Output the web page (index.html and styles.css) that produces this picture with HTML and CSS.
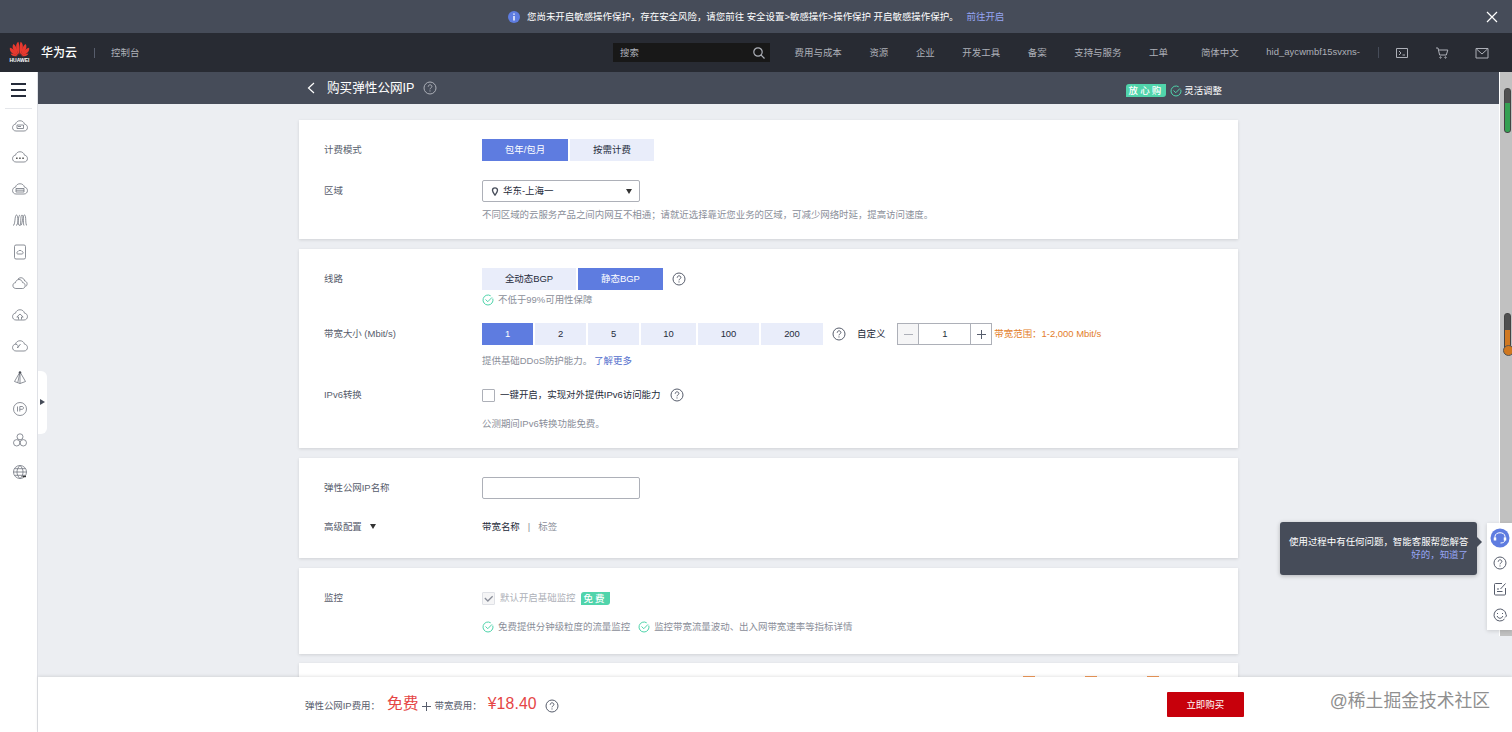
FILE: index.html
```html
<!DOCTYPE html>
<html lang="zh-CN">
<head>
    <meta charset="UTF-8">
    <meta name="viewport" content="width=device-width, initial-scale=1.0">
    <title>购买弹性公网IP</title>
    <link rel="stylesheet" href="styles.css">
</head>
<body>
    <svg class="symbols">
        <symbol id="help" viewBox="0 0 14 14">
            <circle cx="7" cy="7" r="6"/>
            <path d="M5.2 5.7C5.2 3.2 8.9 3.3 8.9 5.5C8.9 6.8 7 6.9 7 8.3M7 9.4V10.5"/>
        </symbol>
        <symbol id="check" viewBox="0 0 12 12">
            <path d="M10.8 4.6A5 5 0 1 1 8.7 1.8M3.5 5.5L5.8 7.7L10 3.4"/>
        </symbol>
        <symbol id="cloud" viewBox="0 0 16 14">
            <path d="M4 12C-0.5 12 -0.5 5.500 3.500 5.200C4.500 0.600 11.500 0.600 12.500 5.200C16.500 5.500 16.500 12 12 12Z"/>
        </symbol>
    </svg>

    <div class="notice">
        <svg class="info" viewBox="0 0 12 12"><circle cx="6" cy="6" r="6"/><path d="M6 2.4V3.8M6 4.9V9.4"/></svg>
        <span class="notice-text">您尚未开启敏感操作保护，存在安全风险，请您前往 安全设置&gt;敏感操作&gt;操作保护 开启敏感操作保护。</span>
        <a class="notice-link">前往开启</a>
        <svg class="close" viewBox="0 0 12 12"><path d="M1 1L11 11M11 1L1 11"/></svg>
    </div>

    <div class="topbar">
        <div class="logo">
            <svg viewBox="0 0 22 16">
                <g fill="#e8392f">
                    <path d="M10.6 14C7 9 6.300 3 9.700 0.500C11 3 11.100 9 10.600 14Z"/>
                    <path d="M11.400 14C15 9 15.700 3 12.300 0.500C11 3 10.900 9 11.400 14Z"/>
                    <path d="M9.700 14.200C4.500 10.500 2.500 6 4.600 2.700C7.500 4.500 9 9 9.700 14.200Z"/>
                    <path d="M12.300 14.200C17.500 10.500 19.500 6 17.400 2.700C14.500 4.500 13 9 12.300 14.200Z"/>
                    <path d="M9.200 14.700C4 14 0.200 11 0.900 6.800C4.500 7.500 7.500 11 9.200 14.700Z"/>
                    <path d="M12.800 14.700C18 14 21.800 11 21.100 6.800C17.500 7.500 14.500 11 12.800 14.700Z"/>
                    <path d="M8.800 15.300C5.500 16.200 2.700 15.500 1.600 12.800C4.500 12.800 7 14 8.800 15.300Z"/>
                    <path d="M13.200 15.300C16.500 16.200 19.300 15.500 20.400 12.800C17.500 12.800 15 14 13.200 15.300Z"/>
                </g>
            </svg>
            <span>HUAWEI</span>
        </div>
        <div class="brand">华为云</div>
        <div class="line"></div>
        <div class="console">控制台</div>
        <div class="nav">
            <div class="search">
                <span>搜索</span>
                <svg viewBox="0 0 12 12"><circle cx="5" cy="5" r="4.200"/><path d="M8 8L11.500 11.500"/></svg>
            </div>
            <div class="nav-item">费用与成本</div>
            <div class="nav-item">资源</div>
            <div class="nav-item">企业</div>
            <div class="nav-item">开发工具</div>
            <div class="nav-item">备案</div>
            <div class="nav-item">支持与服务</div>
            <div class="nav-item">工单</div>
            <div class="nav-item lang">简体中文</div>
            <div class="nav-item user">hid_aycwmbf15svxns-</div>
            <div class="nav-icons">
                <svg viewBox="0 0 14 12"><path d="M1.500 1.500H12.500V10.500H1.500ZM4 4L6 6L4 8M7.500 8H10"/></svg>
                <svg viewBox="0 0 14 12"><path d="M1 1H3L4.600 8H11.300L12.800 3H3.500"/><circle cx="5.500" cy="10.500" r=".7"/><circle cx="10.500" cy="10.500" r=".7"/></svg>
                <svg viewBox="0 0 14 12"><path d="M1 1.500H13V11H1ZM1.500 2L7 7L12.500 2"/></svg>
            </div>
        </div>
    </div>

    <div class="main">
        <div class="sidebar">
            <div class="menu"><i></i><i></i><i></i></div>
            <div class="side-list">
                <svg viewBox="0 0 16 14"><use href="#cloud"/><path d="M5 6H11.500V9.500H5ZM6 7.500H9"/></svg>
                <svg viewBox="0 0 16 14"><use href="#cloud"/><path class="dark" d="M4.200 8.200H5.500M7.300 8.200H8.600M10.400 8.200H11.700"/></svg>
                <svg viewBox="0 0 16 14"><use href="#cloud"/><path d="M4 6.500H12V10H4ZM4 8.200H12"/></svg>
                <svg viewBox="0 0 16 14"><path d="M1 12.500C3.500 12.500 2.500 2 4.500 2S5.500 12.500 7.500 12.500S8 2 10 2S11 12.500 12 12.500M4 12.500C6.500 12.500 6 2 8 2M8.500 12.500C10.500 12.500 10.500 2 12.500 2S13 12.500 15 12.500"/></svg>
                <svg viewBox="0 0 16 14"><rect x="2.500" y="0" width="11" height="14" rx="1.500"/><path d="M6 9C4 9 5 6.500 6 6.500C6.500 5 9.500 5 10 6.500C12 7 11 9 10 9Z"/></svg>
                <svg viewBox="0 0 16 14"><path d="M3.800 12.500C0 12.500 0 6.800 3.400 6.800C4.300 2.300 9.700 2.500 10.500 6.600C14 6.800 14 12.500 10.500 12.500ZM6 3C8.500 0.500 12.200 2 12.700 5C15.500 5.500 15.800 8.800 13.800 10.500"/></svg>
                <svg viewBox="0 0 16 14"><use href="#cloud"/><path d="M6.500 11.500V9H4.800L8 6L11.200 9H9.500V11.500"/></svg>
                <svg viewBox="0 0 16 14"><use href="#cloud"/><path d="M3.500 5.200C6 5.200 6.500 7 5.500 9M5.500 9L8.500 5"/></svg>
                <svg viewBox="0 0 16 14"><path d="M8 1L2.500 10.500L8 12.500L13.500 10.500ZM8 1V12.500M8 1L5.800 11.500"/><circle class="dot" cx="8" cy="1.500" r="1"/></svg>
                <svg viewBox="0 0 16 14"><circle cx="8" cy="7" r="6.500"/><path d="M5.500 4.500V9.500M7.800 9.500V4.500H10C12 4.500 12 7.300 10 7.300H7.800"/></svg>
                <svg viewBox="0 0 16 14"><circle cx="8" cy="3.800" r="3"/><circle cx="4.700" cy="9.800" r="3.200"/><circle cx="11.300" cy="9.800" r="3.200"/></svg>
                <svg viewBox="0 0 16 14"><circle cx="8" cy="7" r="6.500"/><path d="M1.500 7H14.500M2.500 3.700H13.500M2.500 10.300H13.500M8 0.500C4 4 4 10 8 13.500M8 0.500C12 4 12 10 8 13.500"/><path class="dark" d="M10.500 11.500H14"/></svg>
            </div>
        </div>

        <div class="right">
            <div class="view">
                <div class="page">
                    <div class="page-head">
                        <div class="wrap">
                            <svg class="back" viewBox="0 0 8 12"><path d="M7 1L1.500 6L7 11"/></svg>
                            <h1>购买弹性公网IP</h1>
                            <svg class="help"><use href="#help"/></svg>
                            <div class="promise">
                                <span class="tag">放心购</span>
                                <svg class="check"><use href="#check"/></svg>
                                <span>灵活调整</span>
                            </div>
                        </div>
                    </div>

                    <div class="cards">
                        <div class="card card-region">
                            <div class="row">
                                <div class="label">计费模式</div>
                                <div class="btn active w86">包年/包月</div>
                                <div class="btn w84">按需计费</div>
                            </div>
                            <div class="row row-region">
                                <div class="label">区域</div>
                                <div class="select">
                                    <svg viewBox="0 0 8 10"><path d="M4 9C2.500 7 1.200 5.500 1.200 3.700A2.800 2.800 0 0 1 6.800 3.700C6.800 5.500 5.500 7 4 9Z"/></svg>
                                    <span>华东-上海一</span>
                                    <i class="arrow"></i>
                                </div>
                            </div>
                            <div class="hint hint-region">不同区域的云服务产品之间内网互不相通；请就近选择靠近您业务的区域，可减少网络时延，提高访问速度。</div>
                        </div>

                        <div class="card card-line">
                            <div class="row">
                                <div class="label">线路</div>
                                <div class="btn w94">全动态BGP</div>
                                <div class="btn active w85">静态BGP</div>
                                <svg class="help"><use href="#help"/></svg>
                            </div>
                            <div class="hint hint-line">
                                <svg class="check"><use href="#check"/></svg>
                                <span>不低于99%可用性保障</span>
                            </div>
                            <div class="row row-band">
                                <div class="label">带宽大小 (Mbit/s)</div>
                                <div class="btn active w51">1</div>
                                <div class="btn w51">2</div>
                                <div class="btn w51">5</div>
                                <div class="btn w55">10</div>
                                <div class="btn w61">100</div>
                                <div class="btn w62">200</div>
                                <svg class="help help-band"><use href="#help"/></svg>
                                <span class="custom">自定义</span>
                                <div class="stepper">
                                    <span class="minus"></span>
                                    <span class="num">1</span>
                                    <span class="plus"></span>
                                </div>
                                <span class="range">带宽范围：1-2,000 Mbit/s</span>
                            </div>
                            <div class="hint hint-ddos">提供基础DDoS防护能力。<a>了解更多</a></div>
                            <div class="row row-ipv6">
                                <div class="label">IPv6转换</div>
                                <span class="checkbox"></span>
                                <span>一键开启，实现对外提供IPv6访问能力</span>
                                <svg class="help help-ipv6"><use href="#help"/></svg>
                            </div>
                            <div class="hint hint-free">公测期间IPv6转换功能免费。</div>
                        </div>

                        <div class="card card-name">
                            <div class="row">
                                <div class="label">弹性公网IP名称</div>
                                <input class="input" type="text">
                            </div>
                            <div class="row row-adv">
                                <div class="label">高级配置<i class="arrow"></i></div>
                                <span class="strong">带宽名称</span>
                                <span class="split">|</span>
                                <span class="gray">标签</span>
                            </div>
                        </div>

                        <div class="card card-monitor">
                            <div class="row">
                                <div class="label">监控</div>
                                <span class="checkbox disabled"><svg viewBox="0 0 12 12"><path d="M2 5.500L5.300 8.800L10.500 3.500"/></svg></span>
                                <span class="light">默认开启基础监控</span>
                                <span class="tag tag-free">免费</span>
                            </div>
                            <div class="hint hint-free">
                                <svg class="check"><use href="#check"/></svg>
                                <span>免费提供分钟级粒度的流量监控</span>
                                <svg class="check second"><use href="#check"/></svg>
                                <span>监控带宽流量波动、出入网带宽速率等指标详情</span>
                            </div>
                        </div>

                        <div class="card card-last"><i></i><i></i><i></i></div>
                    </div>
                </div>
                <div class="scroll">
                    <div class="thumb green"></div>
                    <div class="thumb orange"></div>
                </div>
            </div>

            <div class="footer">
                <span>弹性公网IP费用：</span>
                <span class="price">免费</span>
                <span class="add"></span>
                <span>带宽费用：</span>
                <span class="price money">¥18.40</span>
                <svg class="help"><use href="#help"/></svg>
                <div class="buy">立即购买</div>
                <div class="mark">@稀土掘金技术社区</div>
            </div>
        </div>
    </div>

    <div class="fold"><i></i></div>

    <div class="tip">
        <div>使用过程中有任何问题，智能客服帮您解答</div>
        <a>好的，知道了</a>
    </div>
    <div class="tools">
        <svg class="service" viewBox="0 0 20 20"><circle class="bg" cx="10" cy="10" r="9.500"/><path d="M5 10V8.500C5 3.500 15 3.500 15 8.500V12C15 14 13 15 10.500 15"/><path class="ear" d="M5 9.500V12.500M15 9.500V12.500"/></svg>
        <svg class="help"><use href="#help"/></svg>
        <svg viewBox="0 0 14 14"><path d="M9 1.500H2.500Q1.500 1.500 1.500 2.500V12Q1.500 13 2.500 13H11.500Q12.500 13 12.500 12V6M12.500 1.500L7.500 7M4 7H6M4 9.500H9.500"/></svg>
        <svg viewBox="0 0 14 14"><path d="M11.500 11A6 6 0 1 1 13 6.500L13.500 8L12 9.500M4.200 8C5 11 9 11 9.800 8M4.500 5V6M9.500 5V6"/></svg>
    </div>
</body>
</html>
```
FILE: styles.css
```css
* {
    box-sizing: border-box;
}
body {
    margin: 0;
    height: 732px;
    overflow: hidden;
    position: relative;
    display: flex;
    flex-direction: column;
    font-family: "Liberation Sans", "Noto Sans CJK SC", sans-serif;
    font-size: 9.45px;
    line-height: 14px;
    color: #252b3a;
    background-color: #eceef2;
    white-space: nowrap;
}
svg {
    fill: none;
    stroke: currentColor;
    flex-shrink: 0;
}
.symbols {
    position: absolute;
    width: 0;
    height: 0;
}
.help {
    width: 14px;
    height: 14px;
    color: #575d6c;
}
.check {
    width: 12px;
    height: 12px;
    color: #50d4ab;
}
.arrow {
    border: 3.5px solid transparent;
    border-top: 5px solid #333;
    border-bottom: 0;
}
.notice {
    height: 33px;
    display: flex;
    align-items: center;
    padding-left: 508px;
    padding-right: 14px;
    background-color: #464c59;
    color: #fff;
}
.notice .info {
    width: 12px;
    height: 12px;
    margin-right: 7px;
    color: #fff;
    stroke-width: 1.4;
}
.notice .info circle {
    fill: #5e7ce0;
    stroke: none;
}
.notice-link {
    margin-left: 8px;
    color: #96a6f5;
}
.notice .close {
    width: 12px;
    height: 12px;
    margin-left: auto;
    stroke-width: 1.2;
}
.topbar {
    height: 39px;
    display: flex;
    align-items: center;
    padding-left: 8px;
    background-color: #282b33;
    color: #adb0b8;
}
.logo {
    width: 23px;
    display: flex;
    flex-direction: column;
    align-items: center;
}
.logo svg {
    width: 21px;
    height: 16px;
    stroke: none;
}
.logo span {
    font-size: 5px;
    line-height: 7px;
    font-weight: bold;
    color: #fff;
}
.brand {
    margin-left: 10px;
    font-size: 12px;
    font-weight: 500;
    color: #fff;
}
.line {
    width: 1px;
    height: 10px;
    margin: 0 16px 0 17px;
    background-color: #575d6c;
}
.nav {
    width: 899px;
    margin-left: auto;
    display: flex;
    align-items: center;
}
.search {
    width: 157px;
    height: 19px;
    padding: 0 5px 0 7px;
    margin-right: -3px;
    display: flex;
    align-items: center;
    justify-content: space-between;
    background-color: #181818;
}
.search svg {
    width: 12px;
    height: 12px;
    stroke-width: 1.2;
}
.nav-item {
    margin-left: 27.6px;
}
.nav-item.lang {
    margin-left: 33px;
}
.nav-item.user {
    width: 94px;
    margin-top: -2px;
    letter-spacing: .05px;
}
.nav-icons {
    height: 11px;
    display: flex;
    gap: 26px;
    padding-left: 16px;
    margin-left: 18px;
    border-left: 1px solid #464c59;
}
.nav-icons svg {
    width: 14px;
    height: 12px;
}
.main {
    flex: 1;
    display: flex;
}
.sidebar {
    width: 38px;
    background-color: #fff;
    border-right: 1px solid #dfe1e6;
}
.menu {
    height: 37px;
    margin: 0 5px;
    padding: 11px 6px 0;
    border-bottom: 1px solid #e4e6ea;
}
.menu i {
    display: block;
    width: 15px;
    height: 1.5px;
    margin-bottom: 4.5px;
    background-color: #252b3a;
}
.side-list {
    padding: 10px 0 0 12px;
    display: flex;
    flex-direction: column;
    gap: 17.45px;
}
.side-list svg {
    width: 16px;
    height: 14px;
    color: #70757f;
    stroke-width: .8;
    overflow: visible;
}
.side-list .dark {
    stroke: #333;
    stroke-width: 1.4;
}
.side-list .dot {
    fill: #222;
}
.right {
    width: 1474px;
    display: flex;
    flex-direction: column;
}
.view {
    height: 605px;
    display: flex;
    overflow: hidden;
}
.page {
    width: 1461px;
}
.page-head {
    height: 32px;
    background-color: #464c59;
    color: #fff;
}
.page-head .wrap {
    height: 32px;
    padding: 0 277px 0 269px;
    display: flex;
    align-items: center;
}
.back {
    width: 8px;
    height: 12px;
    margin-right: 12px;
    stroke-width: 1.2;
}
h1 {
    margin: 0;
    font-size: 12.6px;
    font-weight: normal;
}
.page-head .help {
    margin-left: 9px;
    color: #adb0b8;
}
.promise {
    display: flex;
    align-items: center;
    margin-left: auto;
    padding-top: 5px;
}
.tag {
    height: 13px;
    padding: 0 3px;
    border-radius: 3px 0;
    background-color: #50d4ab;
    color: #fff;
    line-height: 13px;
    letter-spacing: 2.1px;
    font-weight: 500;
}
.promise .check {
    margin: 0 2px 0 4px;
}
.cards {
    width: 939px;
    margin: 16px 0 0 261px;
}
.card {
    padding: 19px 0 0 25px;
    margin-bottom: 10px;
    background-color: #fff;
    box-shadow: 0 1px 3px rgba(0, 0, 0, .12);
}
.card-region {
    height: 119px;
}
.card-line {
    height: 199px;
}
.card-name {
    height: 100px;
}
.card-monitor {
    height: 86px;
    margin-bottom: 9px;
}
.card-last {
    height: 60px;
    padding: 13px 0 0 724px;
    display: flex;
    gap: 50px;
}
.card-last i {
    width: 12px;
    height: 12px;
    background-color: #ef9a5b;
}
.row {
    height: 22px;
    display: flex;
    align-items: center;
}
.row-region {
    margin-top: 19px;
}
.row-band {
    margin-top: 16px;
}
.row-ipv6 {
    margin-top: 16px;
}
.row-adv {
    margin-top: 17px;
}
.label {
    width: 158px;
    color: #575d6c;
}
.label .arrow {
    display: inline-block;
    margin-left: 8px;
    vertical-align: 1px;
}
.hint {
    height: 14px;
    padding-left: 158px;
    display: flex;
    align-items: center;
    color: #8a8e99;
}
.hint-region {
    margin-top: 6px;
    letter-spacing: -.04px;
}
.hint-line {
    margin-top: 3px;
}
.hint-ddos {
    margin-top: 9px;
}
.hint-free {
    margin-top: 11px;
}
.hint a {
    margin-left: 2px;
    color: #526ecc;
}
.hint .check {
    margin-right: 4px;
}
.hint .second {
    margin-left: 8px;
}
.btn {
    height: 22px;
    margin-right: 2px;
    line-height: 22px;
    text-align: center;
    background-color: #e9edfa;
}
.btn.active {
    background-color: #5e7ce0;
    color: #fff;
}
.w51 {
    width: 51px;
}
.w55 {
    width: 55px;
}
.w61 {
    width: 61px;
}
.w62 {
    width: 62px;
}
.w84 {
    width: 84px;
}
.w85 {
    width: 85px;
}
.w86 {
    width: 86px;
}
.w94 {
    width: 94px;
}
.row .help {
    margin-left: 7px;
}
.select, .input {
    width: 158px;
    height: 22px;
    border: 1px solid #adb0b8;
    border-radius: 2px;
    background-color: #fff;
}
.select {
    padding: 0 7px 0 8px;
    display: flex;
    align-items: center;
}
.select svg {
    width: 8px;
    height: 9px;
    margin-right: 4px;
    stroke-width: 1.5;
    color: #464c59;
}
.select .arrow {
    margin-left: auto;
}
.custom {
    margin: 0 12px 0 11px;
}
.stepper {
    width: 95px;
    height: 22px;
    display: flex;
    border: 1px solid #adb0b8;
}
.stepper .num {
    flex: 1;
    line-height: 20px;
    text-align: center;
    border-left: 1px solid #adb0b8;
    border-right: 1px solid #adb0b8;
}
.minus, .plus {
    width: 20px;
    background: linear-gradient(#575d6c, #575d6c) center / 9px 1px no-repeat;
}
.minus {
    background: linear-gradient(#adb0b8, #adb0b8) center / 9px 1px no-repeat #f5f5f6;
}
.plus, .add {
    background: linear-gradient(#575d6c, #575d6c) center / 9px 1px no-repeat, linear-gradient(#575d6c, #575d6c) center / 1px 9px no-repeat;
}
.range {
    margin: -1px 0 0 2px;
    color: #e37d29;
}
.checkbox {
    width: 13px;
    height: 13px;
    margin-right: 5px;
    border: 1px solid #adb0b8;
    border-radius: 1px;
}
.checkbox.disabled {
    border-color: #dfe1e6;
    background-color: #f5f5f6;
    color: #8a8e99;
}
.checkbox svg {
    display: block;
    width: 11px;
    height: 11px;
    stroke-width: 1.4;
}
.row .help-ipv6 {
    margin-left: 10px;
}
.strong {
    color: #252b3a;
}
.split {
    margin: 0 8px;
    color: #8a8e99;
}
.gray {
    color: #8a8e99;
}
.light {
    color: #adb0b8;
}
.tag-free {
    margin-left: 5px;
}
.scroll {
    width: 13px;
    height: 564px;
    position: relative;
    border-left: 1px solid #fff;
    background-color: #c1c1c1;
}
.thumb {
    position: absolute;
    left: 4px;
    width: 7px;
    border-radius: 3px;
}
.thumb.green {
    top: 16px;
    height: 45px;
    border: 1px solid #444;
    background: linear-gradient(#505050 14px, #35a052 14px);
}
.thumb.orange {
    top: 241px;
    height: 42px;
    border: 1px solid #444;
    background: linear-gradient(#505050 16px, #d07820 16px);
}
.thumb.orange::after {
    content: "";
    position: absolute;
    left: -2px;
    bottom: -2px;
    width: 9px;
    height: 9px;
    border: 1px solid #555;
    border-radius: 50%;
    background-color: #d07820;
}
.footer {
    height: 55px;
    padding-left: 267px;
    padding-top: 3px;
    display: flex;
    align-items: center;
    background-color: #fff;
    box-shadow: 0 -1px 3px rgba(0, 0, 0, .1);
    position: relative;
    color: #575d6c;
}
.price {
    margin: -4px 3px 0 7px;
    font-size: 15.75px;
    color: #e54545;
}
.add {
    width: 10px;
    height: 10px;
    margin-right: 3px;
}
.money {
    margin-left: 6px;
    margin-right: 8px;
    letter-spacing: .15px;
}
.buy {
    width: 77px;
    height: 25px;
    margin: -3px 0 0 608px;
    border-radius: 1px;
    background-color: #c7000b;
    color: #fff;
    line-height: 25px;
    text-align: center;
}
.mark {
    margin: -10px 0 0 86px;
    font-size: 17.8px;
    color: #8f8f8f;
}
.fold {
    position: absolute;
    left: 38px;
    top: 371px;
    width: 9px;
    height: 63px;
    padding: 28px 0 0 2px;
    border-radius: 0 6px 6px 0;
    background-color: #fff;
}
.fold i {
    display: block;
    width: 0;
    border: 3.5px solid transparent;
    border-left: 5px solid #464c59;
    border-right: 0;
}
.tip {
    position: absolute;
    left: 1280px;
    top: 522px;
    width: 197px;
    height: 53px;
    padding: 13px 9px 0;
    border-radius: 3px;
    background-color: #464c59;
    box-shadow: 0 1px 4px rgba(0, 0, 0, .25);
    color: #fff;
    line-height: 13px;
    text-align: right;
}
.tip::after {
    content: "";
    position: absolute;
    left: 197px;
    top: 15px;
    border: 5px solid transparent;
    border-left-color: #464c59;
    border-right: 0;
}
.tip a {
    color: #96a6f5;
}
.tools {
    position: absolute;
    left: 1487px;
    top: 523px;
    width: 25px;
    height: 107px;
    padding-top: 5px;
    display: flex;
    flex-direction: column;
    align-items: center;
    gap: 12px;
    background-color: #fff;
    box-shadow: 0 1px 4px rgba(0, 0, 0, .15);
}
.tools svg {
    width: 14px;
    height: 14px;
    color: #575d6c;
}
.tools .service {
    width: 20px;
    height: 20px;
    margin-bottom: -4px;
    color: #fff;
}
.service .bg {
    fill: #5e7ce0;
    stroke: none;
}
.service .ear {
    stroke-width: 2.5;
}
```
